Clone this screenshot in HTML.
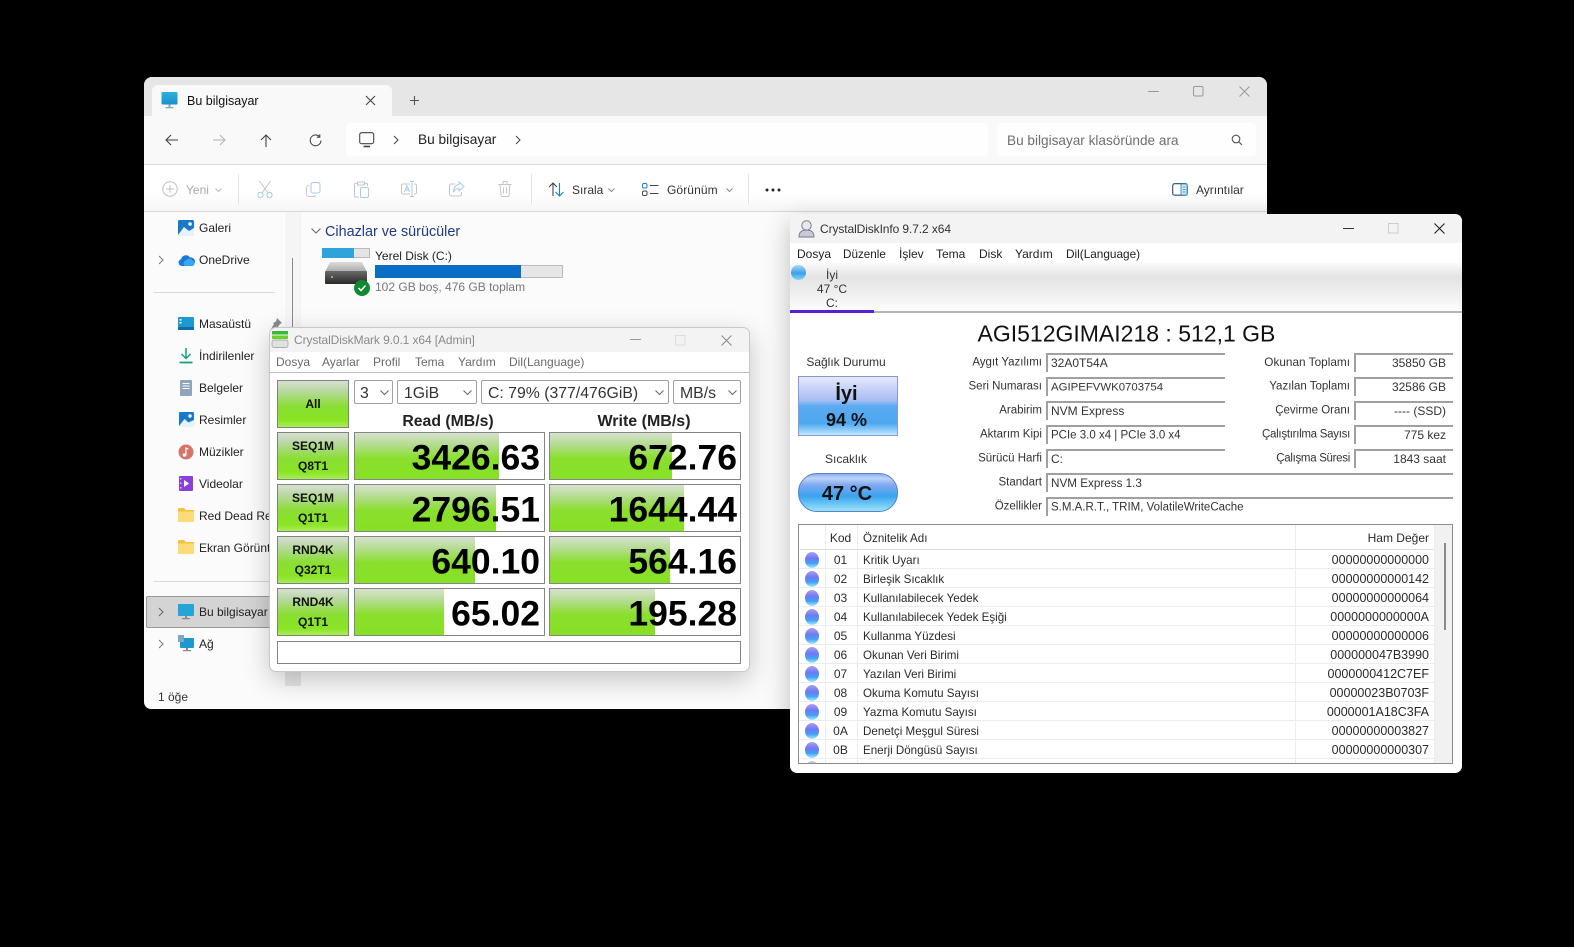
<!DOCTYPE html>
<html><head><meta charset="utf-8"><title>Bu bilgisayar</title>
<style>
*{box-sizing:border-box}
html,body{margin:0;padding:0;background:#000;width:1574px;height:947px;overflow:hidden}
body{font-family:"Liberation Sans",sans-serif;position:relative;color:#1a1a1a}
.a{position:absolute}
.t{position:absolute;white-space:nowrap;line-height:1;transform:translateY(-50%)}
.r{transform:translate(-100%,-50%)}
.c{transform:translate(-50%,-50%)}
svg{position:absolute;overflow:visible}
.win{position:absolute;overflow:hidden}
.nav{font-size:12px;color:#222;left:199px}
.tb{font-size:12px;color:#333}
.g{color:#a8a8a8}
.m1{font-size:12px;color:#6a6a6a;top:362px}
.sel{position:absolute;top:380px;height:24px;background:#fff;border:1px solid #a0a0a0;border-radius:2px}
.stxt{font-size:15.8px;color:#333}
.btn{position:absolute;left:277px;width:72px;border:1px solid #7b8579;background:linear-gradient(#d8dfd4 0,#b8d8a0 22%,#8ade34 55%,#8ae424 85%,#a8ec58 100%)}
.cell{position:absolute;width:191.5px;height:48px;border:1px solid #858585;background:#fff;overflow:hidden}
.fill{position:absolute;left:0;top:0;bottom:0;background:linear-gradient(#d8e2d0 0,#b4dc90 25%,#8adf2e 55%,#86e024 100%)}
.num{font-weight:bold;font-size:35.5px;color:#000}
.bl{font-weight:bold;font-size:12px;color:#111;left:313px}
.lab{font-size:11.5px;color:#333;left:0;margin-top:1px}
.box{position:absolute;height:19px;border-top:2px solid #a0a0a0;border-left:2px solid #a0a0a0;background:#fff}
.v{font-size:12px;color:#333}
.v2{margin-top:1px}
.ball{position:absolute;width:14px;height:16px;left:805px;border-radius:50%;background:linear-gradient(#a8a0f2 0,#7078f2 40%,#40a2f4 70%,#a4eaff 100%)}
.ln{position:absolute;left:799px;width:635px;height:1px;background:#ececec}
.n{font-size:11.6px;color:#2a2a2a;left:863px;margin-top:1px}
.k{font-size:12px;color:#2a2a2a;left:840.5px}
.h{font-size:12.5px;color:#2a2a2a;left:1429px}
</style></head><body>

<!-- EXPLORER -->
<div class="win" style="left:144px;top:77px;width:1123px;height:632px;background:#fbfbfb;border-radius:8px 8px 7px 7px"></div>
<div class="a" style="left:144px;top:77px;width:1123px;height:39px;background:#e6e6e6;border-radius:8px 8px 0 0"></div>
<div class="a" style="left:152px;top:85px;width:240px;height:31px;background:#f9f9f9;border-radius:6px 6px 0 0"></div>
<svg style="left:161px;top:92px" width="18" height="18" viewBox="0 0 18 18"><defs><linearGradient id="mon" x1="0" y1="0" x2="0" y2="1"><stop offset="0" stop-color="#2bb3d8"/><stop offset="1" stop-color="#1b8fd0"/></linearGradient></defs><rect x="0.5" y="0" width="16" height="12.5" rx="1" fill="url(#mon)"/><rect x="7.5" y="12.5" width="2" height="3" fill="#8aa"/><rect x="4.5" y="15" width="8" height="1.3" fill="#8aa"/></svg>
<div class="t" style="left:187px;top:101px;font-size:12.5px;color:#111">Bu bilgisayar</div>
<svg style="left:366px;top:96px" width="9" height="9" viewBox="0 0 9 9"><path d="M0 0L9 9M9 0L0 9" stroke="#444" stroke-width="1.1" fill="none"/></svg>
<svg style="left:410px;top:96px" width="9" height="9" viewBox="0 0 9 9"><path d="M4.5 0V9M0 4.5H9" stroke="#555" stroke-width="1.1" fill="none"/></svg>
<svg style="left:1148px;top:91px" width="11" height="2"><path d="M0 .5H11" stroke="#999"/></svg>
<svg style="left:1193px;top:86px" width="11" height="11"><rect x=".5" y=".5" width="9.5" height="9.5" rx="1.5" fill="none" stroke="#999"/></svg>
<svg style="left:1239px;top:86px" width="11" height="11"><path d="M.5 .5L10.5 10.5M10.5 .5L.5 10.5" stroke="#999" fill="none"/></svg>

<div class="a" style="left:144px;top:116px;width:1123px;height:48px;background:#f9f9f9"></div>
<svg style="left:165px;top:134px" width="13" height="12" viewBox="0 0 13 12"><path d="M13 6H1M6 1L1 6L6 11" stroke="#444" stroke-width="1.1" fill="none"/></svg>
<svg style="left:213px;top:134px" width="13" height="12" viewBox="0 0 13 12"><path d="M0 6H12M7 1L12 6L7 11" stroke="#b4b4b4" stroke-width="1.1" fill="none"/></svg>
<svg style="left:260px;top:134px" width="12" height="13" viewBox="0 0 12 13"><path d="M6 13V1M1 6L6 1L11 6" stroke="#444" stroke-width="1.1" fill="none"/></svg>
<svg style="left:309px;top:134px" width="13" height="13" viewBox="0 0 13 13"><path d="M10.5 2.6A5.4 5.4 0 1 0 12 6.5M10.8 .2V3.2H7.8" stroke="#444" stroke-width="1.05" fill="none"/></svg>
<div class="a" style="left:346px;top:123px;width:642px;height:33px;background:#fefefe;border-radius:4px"></div>
<svg style="left:359px;top:132px" width="16" height="16" viewBox="0 0 16 16"><rect x=".7" y=".7" width="14" height="11" rx="2" fill="none" stroke="#444" stroke-width="1.1"/><path d="M4.5 14.5H11" stroke="#444" stroke-width="1.6"/></svg>
<svg style="left:393px;top:135px" width="6" height="10"><path d="M1 1L5 5L1 9" stroke="#444" fill="none"/></svg>
<div class="t" style="left:418px;top:140px;font-size:13.7px;color:#222">Bu bilgisayar</div>
<svg style="left:515px;top:135px" width="6" height="10"><path d="M1 1L5 5L1 9" stroke="#444" fill="none"/></svg>
<div class="a" style="left:997px;top:123px;width:259px;height:33px;background:#fefefe;border-radius:4px"></div>
<div class="t" style="left:1007px;top:141px;font-size:13.6px;color:#6e6e6e">Bu bilgisayar klasöründe ara</div>
<svg style="left:1231px;top:134px" width="12" height="12" viewBox="0 0 12 12"><circle cx="5" cy="5" r="3.8" fill="none" stroke="#555" stroke-width="1.1"/><path d="M7.8 7.8L11 11" stroke="#555" stroke-width="1.2"/></svg>
<div class="a" style="left:144px;top:164px;width:1123px;height:1px;background:#d8d8d8"></div>

<!-- toolbar -->
<div class="a" style="left:144px;top:165px;width:1123px;height:46px;background:linear-gradient(#fff,#fff 60%,#f6f6f6)"></div>
<div class="a" style="left:144px;top:211px;width:1123px;height:1px;background:#d8d8d8"></div>
<svg style="left:162px;top:181px" width="16" height="16" viewBox="0 0 16 16"><circle cx="8" cy="8" r="7.2" fill="none" stroke="#c0c0c0"/><path d="M8 4V12M4 8H12" stroke="#c0c0c0"/></svg>
<div class="t tb g" style="left:186px;top:190px">Yeni</div>
<svg style="left:215px;top:188px" width="7" height="4"><path d="M.5 .5L3.5 3.5L6.5 .5" stroke="#bbb" fill="none"/></svg>
<div class="a" style="left:238px;top:174px;width:1px;height:30px;background:#e4e4e4"></div>
<svg style="left:257px;top:181px" width="16" height="17" viewBox="0 0 16 17"><path d="M2.5 0L11 12M13.5 0L5 12" stroke="#c4c4c4" fill="none"/><circle cx="3.5" cy="14" r="2.6" fill="none" stroke="#a6cbe8"/><circle cx="12.5" cy="14" r="2.6" fill="none" stroke="#a6cbe8"/></svg>
<svg style="left:306px;top:182px" width="15" height="15" viewBox="0 0 15 15"><rect x="5" y=".5" width="9" height="10.5" rx="2" fill="none" stroke="#a6cbe8"/><path d="M3 3.5A2.5 2.5 0 0 0 .5 6V12A2.5 2.5 0 0 0 3 14.5H7A2.5 2.5 0 0 0 9.5 13" fill="none" stroke="#c4c4c4"/></svg>
<svg style="left:354px;top:181px" width="15" height="17" viewBox="0 0 15 17"><path d="M3 2.5H1.5A1 1 0 0 0 .5 3.5V15A1 1 0 0 0 1.5 16H5M11 2.5H12.5A1 1 0 0 1 13.5 3.5V5M3.5 1H10.5V4H3.5Z" fill="none" stroke="#c4c4c4"/><rect x="6.5" y="6.5" width="8" height="10" rx="1.5" fill="none" stroke="#a6cbe8"/></svg>
<svg style="left:401px;top:181px" width="16" height="16" viewBox="0 0 16 16"><path d="M9 3H2A1.5 1.5 0 0 0 .5 4.5V11.5A1.5 1.5 0 0 0 2 13H9M13 3H14A1.5 1.5 0 0 1 15.5 4.5V11.5A1.5 1.5 0 0 1 14 13H13" fill="none" stroke="#c4c4c4"/><path d="M11 1V15M9 .5H13M9 15.5H13" stroke="#a6cbe8" fill="none"/><path d="M3.5 11L6 5L8.5 11M4.5 9H7.5" fill="none" stroke="#a6cbe8"/></svg>
<svg style="left:449px;top:181px" width="16" height="16" viewBox="0 0 16 16"><path d="M6 3H2.5A2 2 0 0 0 .5 5V13A2 2 0 0 0 2.5 15H10.5A2 2 0 0 0 12.5 13V11" fill="none" stroke="#c4c4c4"/><path d="M10 1L15 5.5L10 10V7.5C7 7.5 5.5 8.5 4.5 11C4.5 7 6.5 4 10 3.5Z" fill="none" stroke="#a6cbe8"/></svg>
<svg style="left:498px;top:181px" width="14" height="16" viewBox="0 0 14 16"><path d="M.5 3.5H13.5M5 3.5V1.5A1 1 0 0 1 6 .5H8A1 1 0 0 1 9 1.5V3.5M2 3.5L3 14A1.5 1.5 0 0 0 4.5 15.5H9.5A1.5 1.5 0 0 0 11 14L12 3.5M5.5 6.5V12.5M8.5 6.5V12.5" fill="none" stroke="#c4c4c4"/></svg>
<div class="a" style="left:531px;top:174px;width:1px;height:30px;background:#e4e4e4"></div>
<svg style="left:548px;top:182px" width="17" height="15" viewBox="0 0 17 15"><path d="M5 14V1M1 5L5 1L9 5" stroke="#444" fill="none" stroke-width="1.1"/><path d="M11.5 1V14M7.5 10L11.5 14L15.5 10" stroke="#1a7fc8" fill="none" stroke-width="1.1"/></svg>
<div class="t tb" style="left:572px;top:190px">Sırala</div>
<svg style="left:608px;top:188px" width="7" height="4"><path d="M.5 .5L3.5 3.5L6.5 .5" stroke="#888" fill="none"/></svg>
<svg style="left:642px;top:183px" width="17" height="13" viewBox="0 0 17 13"><rect x=".5" y=".5" width="4.5" height="4.5" rx="1.5" fill="none" stroke="#1a7fc8"/><rect x=".5" y="8" width="4.5" height="4.5" rx="1.5" fill="none" stroke="#444"/><path d="M8 2.5H16.5M8 10.5H16.5" stroke="#444"/></svg>
<div class="t tb" style="left:667px;top:190px;letter-spacing:.1px">Görünüm</div>
<svg style="left:726px;top:188px" width="7" height="4"><path d="M.5 .5L3.5 3.5L6.5 .5" stroke="#888" fill="none"/></svg>
<div class="a" style="left:748px;top:174px;width:1px;height:30px;background:#e4e4e4"></div>
<svg style="left:765px;top:188px" width="16" height="4"><circle cx="2" cy="2" r="1.5" fill="#222"/><circle cx="8" cy="2" r="1.5" fill="#222"/><circle cx="14" cy="2" r="1.5" fill="#222"/></svg>
<svg style="left:1172px;top:183px" width="16" height="13" viewBox="0 0 16 13"><rect x=".7" y=".7" width="14.5" height="11.5" rx="2" fill="none" stroke="#2a4a6a" stroke-width="1.1"/><rect x="9" y="1" width="6" height="11" fill="#d8ecf8" stroke="#1a7fc8" stroke-width=".8"/><path d="M10.5 4H13.5M10.5 6.5H13.5M10.5 9H13.5" stroke="#1a7fc8" stroke-width=".8"/></svg>
<div class="t tb" style="left:1196px;top:190px">Ayrıntılar</div>

<!-- sidebar -->
<div class="a" style="left:285px;top:212px;width:16px;height:460px;background:#f5f5f5"></div>
<div class="a" style="left:285px;top:672px;width:16px;height:14px;background:#e6e6e6"></div>
<div class="a" style="left:291.5px;top:258px;width:1.5px;height:100px;background:#8a8a8a"></div>
<svg style="left:178px;top:220px" width="16" height="16" viewBox="0 0 16 16"><rect width="16" height="16" rx="1.5" fill="#1a78c8"/><path d="M0 15L6 7L11 11L16 8V16H0Z" fill="#e8f2fa"/><circle cx="12" cy="4" r="1.8" fill="#fff"/></svg>
<div class="t nav" style="top:228px">Galeri</div>
<svg style="left:158px;top:255px" width="6" height="10"><path d="M1 1L5 5L1 9" stroke="#777" fill="none"/></svg>
<svg style="left:178px;top:254px" width="17" height="12" viewBox="0 0 17 12"><path d="M4 12A3.5 3.5 0 0 1 3 5.2A5 5 0 0 1 12 3.5A4 4 0 0 1 13.5 12Z" fill="#1a7ad8"/><path d="M7 12A3 3 0 0 1 8 6.5A4 4 0 0 1 15 7A2.6 2.6 0 0 1 14 12Z" fill="#35a8ee"/></svg>
<div class="t nav" style="top:260px">OneDrive</div>
<div class="a" style="left:154px;top:292px;width:121px;height:1px;background:#d8d8d8"></div>
<svg style="left:178px;top:317px" width="16" height="13" viewBox="0 0 16 13"><rect width="16" height="13" rx="1" fill="#1c9ad0"/><rect y="10" width="16" height="3" fill="#0f6ca8"/><rect x="1.5" y="2" width="2" height="1.5" fill="#fff"/><rect x="1.5" y="5" width="2" height="1.5" fill="#fff"/></svg>
<div class="t nav" style="top:323.5px">Masaüstü</div>
<svg style="left:270px;top:318px" width="12" height="12" viewBox="0 0 12 12"><path d="M7 0L12 5L10 6L7.5 9.5L6.5 8.5L2 12L1 11L4 6L3 5L6 3.5Z" fill="#8a8a8a"/></svg>
<svg style="left:179px;top:348px" width="14" height="16" viewBox="0 0 14 16"><path d="M7 0V10M2.5 6L7 10.5L11.5 6" fill="none" stroke="#15a080" stroke-width="1.5"/><path d="M.5 14.5H13.5" stroke="#15a080" stroke-width="1.8"/></svg>
<div class="t nav" style="top:355.5px">İndirilenler</div>
<svg style="left:180px;top:380px" width="12" height="16" viewBox="0 0 12 16"><rect width="12" height="16" rx="1" fill="#8fa5bf"/><path d="M2.5 3.5H9.5M2.5 6H9.5M2.5 8.5H9.5" stroke="#fff"/></svg>
<div class="t nav" style="top:387.5px">Belgeler</div>
<svg style="left:179px;top:412px" width="15" height="15" viewBox="0 0 15 15"><rect width="15" height="15" rx="1" fill="#1a78c8"/><path d="M0 14L5.5 7L9.5 10.5L15 8V15H0Z" fill="#e8f2fa"/><circle cx="11" cy="4" r="1.7" fill="#fff"/></svg>
<div class="t nav" style="top:419.5px">Resimler</div>
<svg style="left:178px;top:444px" width="16" height="16" viewBox="0 0 16 16"><circle cx="8" cy="8" r="7.5" fill="#d8736a"/><circle cx="6.5" cy="11" r="1.8" fill="#fff"/><path d="M8 11V4L10.5 5" stroke="#fff" stroke-width="1.2" fill="none"/></svg>
<div class="t nav" style="top:451.5px">Müzikler</div>
<svg style="left:179px;top:476px" width="14" height="15" viewBox="0 0 14 15"><rect width="14" height="15" rx="1" fill="#8a3fd8"/><path d="M5 4L10 7.5L5 11Z" fill="#fff"/><rect x="1" y="2" width="1.5" height="1.5" fill="#d8c0f4"/><rect x="1" y="6.5" width="1.5" height="1.5" fill="#d8c0f4"/><rect x="1" y="11" width="1.5" height="1.5" fill="#d8c0f4"/></svg>
<div class="t nav" style="top:483.5px">Videolar</div>
<svg style="left:178px;top:508px" width="16" height="14" viewBox="0 0 16 14"><path d="M0 1A1 1 0 0 1 1 0H6L8 2H16V14H0Z" fill="#f3c23c"/><rect y="3.5" width="16" height="10.5" fill="#fbdc78"/></svg>
<div class="t nav" style="top:515.5px;width:86px;overflow:hidden;line-height:14px">Red Dead Redemption 2</div>
<svg style="left:178px;top:540px" width="16" height="14" viewBox="0 0 16 14"><path d="M0 1A1 1 0 0 1 1 0H6L8 2H16V14H0Z" fill="#f3c23c"/><rect y="3.5" width="16" height="10.5" fill="#fbdc78"/></svg>
<div class="t nav" style="top:547.5px;width:86px;overflow:hidden;line-height:14px">Ekran Görüntüleri</div>
<div class="a" style="left:154px;top:580.5px;width:121px;height:1px;background:#d8d8d8"></div>
<div class="a" style="left:146px;top:596px;width:130px;height:31.5px;background:#d4d4d4;border:1px solid #999;border-radius:2px"></div>
<svg style="left:158px;top:607px" width="6" height="10"><path d="M1 1L5 5L1 9" stroke="#666" fill="none"/></svg>
<svg style="left:178px;top:604px" width="16" height="16" viewBox="0 0 16 16"><rect width="16" height="12" rx="1" fill="#24a4d8"/><rect x="7" y="12" width="2" height="2.5" fill="#889"/><rect x="4" y="14" width="8" height="1.2" fill="#889"/></svg>
<div class="t nav" style="top:611.5px">Bu bilgisayar</div>
<svg style="left:158px;top:639px" width="6" height="10"><path d="M1 1L5 5L1 9" stroke="#777" fill="none"/></svg>
<svg style="left:178px;top:635px" width="16" height="17" viewBox="0 0 16 17"><rect x="2" y="3" width="14" height="10" rx="1" fill="#1c9ad0"/><rect x="8" y="13" width="2" height="2" fill="#889"/><rect x="5" y="15" width="8" height="1.2" fill="#889"/><rect x="0" y="0" width="6" height="7" fill="#7aa8c8"/></svg>
<div class="t nav" style="top:643.5px">Ağ</div>
<div class="t" style="left:158px;top:697px;font-size:12px;color:#333">1 öğe</div>

<!-- content -->
<svg style="left:311px;top:228px" width="10" height="6"><path d="M.5 .5L5 5L9.5 .5" stroke="#666" fill="none"/></svg>
<div class="t" style="left:325px;top:232px;font-size:14.4px;color:#1e3a8a">Cihazlar ve sürücüler</div>
<div class="a" style="left:322px;top:248px;width:48px;height:10px;background:#e4e4e4;border:1px solid #bbb"></div>
<div class="a" style="left:322px;top:248px;width:32px;height:10px;background:#2ea3dc"></div>
<svg style="left:325px;top:262px" width="42" height="24" viewBox="0 0 42 24"><defs><linearGradient id="dt" x1="0" y1="0" x2="0" y2="1"><stop offset="0" stop-color="#dcdcdc"/><stop offset="1" stop-color="#a8a8a8"/></linearGradient><linearGradient id="db" x1="0" y1="0" x2="0" y2="1"><stop offset="0" stop-color="#6a6a6a"/><stop offset="1" stop-color="#2a2a2a"/></linearGradient></defs><path d="M5 0H37L42 10H0Z" fill="url(#dt)"/><rect y="9" width="42" height="13" rx="1" fill="url(#db)"/><rect x="6" y="14" width="2" height="2" fill="#5fd04a"/></svg>
<svg style="left:354px;top:280px" width="16" height="16" viewBox="0 0 16 16"><circle cx="8" cy="8" r="8" fill="#108a30"/><path d="M4.5 8L7 10.5L11.5 5.5" stroke="#fff" stroke-width="1.5" fill="none"/></svg>
<div class="t" style="left:375px;top:255.5px;font-size:12px;color:#222">Yerel Disk (C:)</div>
<div class="a" style="left:375px;top:265px;width:188px;height:13px;background:#e6e6e6;border:1px solid #bcbcbc"></div>
<div class="a" style="left:375px;top:265px;width:146px;height:13px;background:#0a6fc4"></div>
<div class="t" style="left:375px;top:287px;font-size:12px;color:#777">102 GB boş, 476 GB toplam</div>

<!-- CDM -->
<div class="win" style="left:269px;top:327px;width:481px;height:345px;background:#fff;border-radius:7px;border:1px solid #c8c8c8;box-shadow:0 8px 26px rgba(0,0,0,.22)"></div>
<div class="a" style="left:270px;top:328px;width:479px;height:24px;background:#f3f3f3;border-radius:7px 7px 0 0"></div>
<svg style="left:272px;top:331px" width="16" height="17" viewBox="0 0 16 17"><rect width="16" height="3.5" fill="#3ab83a"/><rect y="4.5" width="16" height="3.5" fill="#6ad02a"/><rect y="9" width="16" height="7.5" rx="2" fill="#e0e0e0" stroke="#999" stroke-width=".7"/></svg>
<div class="t" style="left:294px;top:340px;font-size:12px;color:#8a8a8a;letter-spacing:-.1px">CrystalDiskMark 9.0.1 x64 [Admin]</div>
<svg style="left:630px;top:339px" width="11" height="2"><path d="M0 .5H11" stroke="#999"/></svg>
<svg style="left:675px;top:335px" width="11" height="11"><rect x=".5" y=".5" width="9.5" height="9.5" fill="none" stroke="#ddd"/></svg>
<svg style="left:721px;top:334.5px" width="11" height="11"><path d="M.5 .5L10.5 10.5M10.5 .5L.5 10.5" stroke="#888" fill="none"/></svg>
<div class="t m1" style="left:276px">Dosya</div>
<div class="t m1" style="left:322px">Ayarlar</div>
<div class="t m1" style="left:373px">Profil</div>
<div class="t m1" style="left:415px">Tema</div>
<div class="t m1" style="left:458px">Yardım</div>
<div class="t m1" style="left:509px">Dil(Language)</div>
<div class="a" style="left:270px;top:372px;width:479px;height:1px;background:#bdbdbd"></div>

<div class="btn" style="top:380px;height:48px"></div>
<div class="t c bl" style="top:403.5px">All</div>

<div class="sel" style="left:353.5px;width:39px"></div>
<div class="sel" style="left:397px;width:79.5px"></div>
<div class="sel" style="left:481px;width:187.5px"></div>
<div class="sel" style="left:673px;width:68px"></div>
<div class="t stxt" style="left:360px;top:393.5px">3</div>
<div class="t stxt" style="left:404px;top:393.5px">1GiB</div>
<div class="t stxt" style="left:488px;top:393.5px">C: 79% (377/476GiB)</div>
<div class="t stxt" style="left:680px;top:393.5px">MB/s</div>
<svg style="left:380px;top:390px" width="9" height="5"><path d="M.5 .5L4.5 4.5L8.5 .5" stroke="#666" fill="none"/></svg>
<svg style="left:463px;top:390px" width="9" height="5"><path d="M.5 .5L4.5 4.5L8.5 .5" stroke="#666" fill="none"/></svg>
<svg style="left:655px;top:390px" width="9" height="5"><path d="M.5 .5L4.5 4.5L8.5 .5" stroke="#666" fill="none"/></svg>
<svg style="left:728px;top:390px" width="9" height="5"><path d="M.5 .5L4.5 4.5L8.5 .5" stroke="#666" fill="none"/></svg>

<div class="t c" style="left:448px;top:422px;font-size:15.8px;font-weight:bold;color:#222">Read (MB/s)</div>
<div class="t c" style="left:644px;top:422px;font-size:16px;font-weight:bold;color:#222">Write (MB/s)</div>

<div class="btn" style="top:432px;height:48px"></div>
<div class="btn" style="top:484px;height:48px"></div>
<div class="btn" style="top:536px;height:48px"></div>
<div class="btn" style="top:588px;height:48px"></div>
<div class="t c bl" style="top:445.5px">SEQ1M</div><div class="t c bl" style="top:466px">Q8T1</div>
<div class="t c bl" style="top:497.5px">SEQ1M</div><div class="t c bl" style="top:518px">Q1T1</div>
<div class="t c bl" style="top:549.5px">RND4K</div><div class="t c bl" style="top:570px">Q32T1</div>
<div class="t c bl" style="top:601.5px">RND4K</div><div class="t c bl" style="top:622px">Q1T1</div>

<div class="cell" style="left:353.5px;top:432px"><div class="fill" style="width:144px"></div></div>
<div class="cell" style="left:549px;top:432px;width:192px"><div class="fill" style="width:122px"></div></div>
<div class="cell" style="left:353.5px;top:484px"><div class="fill" style="width:141px"></div></div>
<div class="cell" style="left:549px;top:484px;width:192px"><div class="fill" style="width:134px"></div></div>
<div class="cell" style="left:353.5px;top:536px"><div class="fill" style="width:120px"></div></div>
<div class="cell" style="left:549px;top:536px;width:192px"><div class="fill" style="width:120px"></div></div>
<div class="cell" style="left:353.5px;top:588px"><div class="fill" style="width:89px"></div></div>
<div class="cell" style="left:549px;top:588px;width:192px"><div class="fill" style="width:105px"></div></div>

<div class="t r num" style="left:540px;top:458px">3426.63</div>
<div class="t r num" style="left:737px;top:458px">672.76</div>
<div class="t r num" style="left:540px;top:510px">2796.51</div>
<div class="t r num" style="left:737px;top:510px">1644.44</div>
<div class="t r num" style="left:540px;top:562px">640.10</div>
<div class="t r num" style="left:737px;top:562px">564.16</div>
<div class="t r num" style="left:540px;top:614px">65.02</div>
<div class="t r num" style="left:737px;top:614px">195.28</div>
<div class="a" style="left:277px;top:640.5px;width:464px;height:23.5px;background:#fff;border:1px solid #858585"></div>

<!-- CDI -->
<div class="win" style="left:790px;top:214px;width:672px;height:559px;background:#fff;border-radius:7px;box-shadow:0 8px 26px rgba(0,0,0,.25)"></div>
<div class="a" style="left:790px;top:214px;width:672px;height:29px;background:#f3f3f3;border-radius:7px 7px 0 0"></div>
<svg style="left:798px;top:220px" width="17" height="18" viewBox="0 0 17 18"><circle cx="8.5" cy="5.5" r="4.7" fill="#e8e8f0" stroke="#7a7a90"/><path d="M1 17C1 11.5 4 10 8.5 10S16 11.5 16 17Z" fill="#c8c8d8" stroke="#7a7a90"/></svg>
<div class="t" style="left:820px;top:229px;font-size:12px;color:#333;letter-spacing:-.1px">CrystalDiskInfo 9.7.2 x64</div>
<svg style="left:1343px;top:228px" width="11" height="2"><path d="M0 .5H11" stroke="#333"/></svg>
<svg style="left:1388px;top:223px" width="11" height="11"><rect x=".5" y=".5" width="9.5" height="9.5" fill="none" stroke="#ccc"/></svg>
<svg style="left:1434px;top:223px" width="11" height="11"><path d="M.5 .5L10.5 10.5M10.5 .5L.5 10.5" stroke="#222" stroke-width="1.1" fill="none"/></svg>
<div class="t" style="left:797px;top:254px;font-size:12px;color:#222">Dosya</div>
<div class="t" style="left:843px;top:255px;font-size:11.7px;color:#222">Düzenle</div>
<div class="t" style="left:899px;top:254px;font-size:12px;color:#222">İşlev</div>
<div class="t" style="left:936px;top:254px;font-size:12px;color:#222">Tema</div>
<div class="t" style="left:979px;top:254px;font-size:12px;color:#222">Disk</div>
<div class="t" style="left:1015px;top:254px;font-size:12px;color:#222">Yardım</div>
<div class="t" style="left:1066px;top:255px;font-size:11.8px;color:#222">Dil(Language)</div>
<div class="a" style="left:790px;top:263px;width:672px;height:48px;background:linear-gradient(#fafafa,#e4e4e4 30%,#ececec 55%,#fdfdfd)"></div>
<div class="a" style="left:790px;top:311px;width:672px;height:1.5px;background:#b4b4b4"></div>
<div class="a" style="left:790px;top:310px;width:84px;height:2.5px;background:#5a1fd0"></div>
<div class="a" style="left:791px;top:265px;width:15px;height:15px;border-radius:50%;background:linear-gradient(#a8d8f8,#3f9fe8 55%,#7fd8f8)"></div>
<div class="t c" style="left:832px;top:275px;font-size:12px;color:#333">İyi</div>
<div class="t c" style="left:832px;top:289px;font-size:12px;color:#333">47 °C</div>
<div class="t c" style="left:832px;top:303px;font-size:12px;color:#333">C:</div>

<div class="t" style="left:977.5px;top:333.5px;font-size:23px;color:#111">AGI512GIMAI218 : 512,1 GB</div>

<div class="t c" style="left:846px;top:361.5px;font-size:12px;color:#333">Sağlık Durumu</div>
<div class="a" style="left:798px;top:376px;width:100px;height:60px;border:1px solid #8a9ad0;background:linear-gradient(#e4e8fc 0,#a9bdf2 40%,#5aaaf0 50%,#4ea8f0 80%,#bfe8fb 100%)"></div>
<div class="t c" style="left:846.5px;top:394px;font-size:20px;font-weight:bold;color:#111">İyi</div>
<div class="t c" style="left:846.5px;top:420px;font-size:18px;font-weight:bold;color:#111">94 %</div>
<div class="t c" style="left:846px;top:458.5px;font-size:12px;color:#333">Sıcaklık</div>
<div class="a" style="left:798px;top:472.5px;width:100px;height:39.5px;border-radius:19px;border:1px solid #5a80d0;background:linear-gradient(#8ab0f0 0,#bcd4f6 12%,#80a8f0 30%,#38a4f0 60%,#9be4fb 100%)"></div>
<div class="t c" style="left:847px;top:494px;font-size:20px;font-weight:bold;color:#111">47 °C</div>

<div class="t r lab" style="left:1042px;top:362px">Aygıt Yazılımı</div>
<div class="t r lab" style="left:1042px;top:386px">Seri Numarası</div>
<div class="t r lab" style="left:1042px;top:410px">Arabirim</div>
<div class="t r lab" style="left:1042px;top:434px">Aktarım Kipi</div>
<div class="t r lab" style="left:1042px;top:458px">Sürücü Harfi</div>
<div class="t r lab" style="left:1042px;top:482px">Standart</div>
<div class="t r lab" style="left:1042px;top:506px">Özellikler</div>

<div class="box" style="left:1046px;top:352.5px;width:179px"></div>
<div class="box" style="left:1046px;top:376.5px;width:179px"></div>
<div class="box" style="left:1046px;top:400.5px;width:179px"></div>
<div class="box" style="left:1046px;top:424.5px;width:179px"></div>
<div class="box" style="left:1046px;top:448.5px;width:179px"></div>
<div class="box" style="left:1046px;top:472.5px;width:407px"></div>
<div class="box" style="left:1046px;top:496.5px;width:407px"></div>
<div class="t v" style="left:1051px;top:363px">32A0T54A</div>
<div class="t v v2" style="left:1051px;top:387px;font-size:11.4px">AGIPEFVWK0703754</div>
<div class="t v" style="left:1051px;top:411px">NVM Express</div>
<div class="t v v2" style="left:1051px;top:435px;font-size:11.5px">PCIe 3.0 x4 | PCIe 3.0 x4</div>
<div class="t v" style="left:1051px;top:459px">C:</div>
<div class="t v v2" style="left:1051px;top:483px;font-size:11.7px">NVM Express 1.3</div>
<div class="t v v2" style="left:1051px;top:507px;font-size:11.5px">S.M.A.R.T., TRIM, VolatileWriteCache</div>

<div class="t r lab" style="left:1350px;top:362px;font-size:11.8px">Okunan Toplamı</div>
<div class="t r lab" style="left:1350px;top:386px">Yazılan Toplamı</div>
<div class="t r lab" style="left:1350px;top:410px">Çevirme Oranı</div>
<div class="t r lab" style="left:1350px;top:434px;letter-spacing:-.28px">Çalıştırılma Sayısı</div>
<div class="t r lab" style="left:1350px;top:458px;letter-spacing:-.3px">Çalışma Süresi</div>
<div class="box" style="left:1354px;top:352.5px;width:99px"></div>
<div class="box" style="left:1354px;top:376.5px;width:99px"></div>
<div class="box" style="left:1354px;top:400.5px;width:99px"></div>
<div class="box" style="left:1354px;top:424.5px;width:99px"></div>
<div class="box" style="left:1354px;top:448.5px;width:99px"></div>
<div class="t r v" style="left:1446px;top:363px">35850 GB</div>
<div class="t r v" style="left:1446px;top:387px">32586 GB</div>
<div class="t r v" style="left:1446px;top:411px">---- (SSD)</div>
<div class="t r v" style="left:1446px;top:435px">775 kez</div>
<div class="t r v" style="left:1446px;top:459px">1843 saat</div>

<!-- table -->
<div class="a" style="left:798px;top:524px;width:655px;height:240px;background:#fff;border:1px solid #8c8c8c;overflow:hidden">
 <div class="a" style="left:636px;top:0;bottom:0;width:18px;background:#f1f1f1"></div>
 <div class="a" style="left:645px;top:18px;width:1.5px;height:87px;background:#8a8a8a"></div>
 <div class="a" style="left:25.5px;top:0;bottom:0;width:1px;background:#ececec"></div>
 <div class="a" style="left:57.5px;top:0;bottom:0;width:1px;background:#ececec"></div>
 <div class="a" style="left:495.5px;top:0;bottom:0;width:1px;background:#ececec"></div>
 <div class="a" style="left:635px;top:0;bottom:0;width:1px;background:#ececec"></div>
 <div class="a" style="left:1px;top:24px;width:634px;height:1px;background:#dcdcdc"></div>
 <div class="a" style="left:6px;top:236px;width:14px;height:16px;border-radius:50%;background:linear-gradient(#c8c4ee,#b8b8ee)"></div>
</div>
<div class="t c k" style="top:537.5px">Kod</div>
<div class="t n" style="top:537.5px">Öznitelik Adı</div>
<div class="t r h" style="top:537.5px;font-size:12px">Ham Değer</div>

<div class="ln" style="top:568px"></div><div class="ln" style="top:587px"></div><div class="ln" style="top:606px"></div><div class="ln" style="top:625px"></div><div class="ln" style="top:644px"></div><div class="ln" style="top:663px"></div><div class="ln" style="top:682px"></div><div class="ln" style="top:701px"></div><div class="ln" style="top:720px"></div><div class="ln" style="top:739px"></div><div class="ln" style="top:758px"></div>

<div class="ball" style="top:552px"></div><div class="t c k" style="top:560px">01</div><div class="t n" style="top:560px">Kritik Uyarı</div><div class="t r h" style="top:560px">00000000000000</div>
<div class="ball" style="top:571px"></div><div class="t c k" style="top:579px">02</div><div class="t n" style="top:579px">Birleşik Sıcaklık</div><div class="t r h" style="top:579px">00000000000142</div>
<div class="ball" style="top:590px"></div><div class="t c k" style="top:598px">03</div><div class="t n" style="top:598px">Kullanılabilecek Yedek</div><div class="t r h" style="top:598px">00000000000064</div>
<div class="ball" style="top:609px"></div><div class="t c k" style="top:617px">04</div><div class="t n" style="top:617px">Kullanılabilecek Yedek Eşiği</div><div class="t r h" style="top:617px">0000000000000A</div>
<div class="ball" style="top:628px"></div><div class="t c k" style="top:636px">05</div><div class="t n" style="top:636px">Kullanma Yüzdesi</div><div class="t r h" style="top:636px">00000000000006</div>
<div class="ball" style="top:647px"></div><div class="t c k" style="top:655px">06</div><div class="t n" style="top:655px">Okunan Veri Birimi</div><div class="t r h" style="top:655px">000000047B3990</div>
<div class="ball" style="top:666px"></div><div class="t c k" style="top:674px">07</div><div class="t n" style="top:674px">Yazılan Veri Birimi</div><div class="t r h" style="top:674px">0000000412C7EF</div>
<div class="ball" style="top:685px"></div><div class="t c k" style="top:693px">08</div><div class="t n" style="top:693px">Okuma Komutu Sayısı</div><div class="t r h" style="top:693px">00000023B0703F</div>
<div class="ball" style="top:704px"></div><div class="t c k" style="top:712px">09</div><div class="t n" style="top:712px">Yazma Komutu Sayısı</div><div class="t r h" style="top:712px">0000001A18C3FA</div>
<div class="ball" style="top:723px"></div><div class="t c k" style="top:731px">0A</div><div class="t n" style="top:731px">Denetçi Meşgul Süresi</div><div class="t r h" style="top:731px">00000000003827</div>
<div class="ball" style="top:742px"></div><div class="t c k" style="top:750px">0B</div><div class="t n" style="top:750px">Enerji Döngüsü Sayısı</div><div class="t r h" style="top:750px">00000000000307</div>

</body></html>
